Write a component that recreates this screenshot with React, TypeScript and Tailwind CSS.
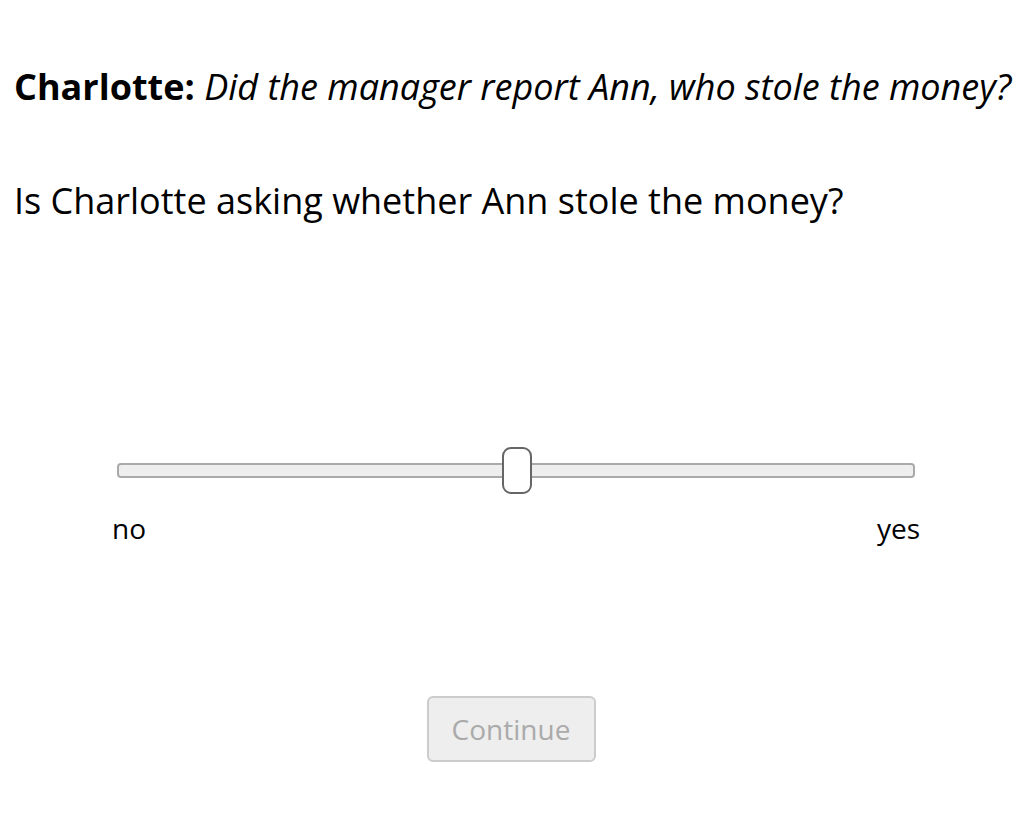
export default function App() {
  return (
    <div className="min-h-[832px] bg-white text-black font-['Open_Sans',sans-serif]">
      <div className="pt-[62px] pl-[14px]">
        <p className="text-[36px] leading-[50px] whitespace-nowrap">
          <b className="font-bold">Charlotte:</b> <i>Did the manager report Ann, who stole the money?</i>
        </p>
        <p className="mt-[64px] text-[36px] leading-[50px]">Is Charlotte asking whether Ann stole the money?</p>
      </div>

      <div className="mt-[221px] ml-[117px] w-[798px]">
        <div className="relative h-[47px] flex items-center">
          <div className="h-[15px] w-full rounded-[4px] border-2 border-[#aaa] bg-[#eee]" />
          <div className="absolute left-[385px] top-0 h-[47px] w-[30px] rounded-[9px] border-2 border-[#666] bg-white" />
        </div>
        <div className="mt-[15px] flex justify-between text-[28px] leading-[38px] -mx-[5px]">
          <span>no</span>
          <span>yes</span>
        </div>
      </div>

      <div className="mt-[149px] flex justify-center pl-[4px]">
        <button
          disabled
          className="h-[66px] w-[169px] rounded-[6px] border-2 border-[#ccc] bg-[#eee] text-[28px] text-[#aaa]"
        >
          Continue
        </button>
      </div>
    </div>
  );
}
